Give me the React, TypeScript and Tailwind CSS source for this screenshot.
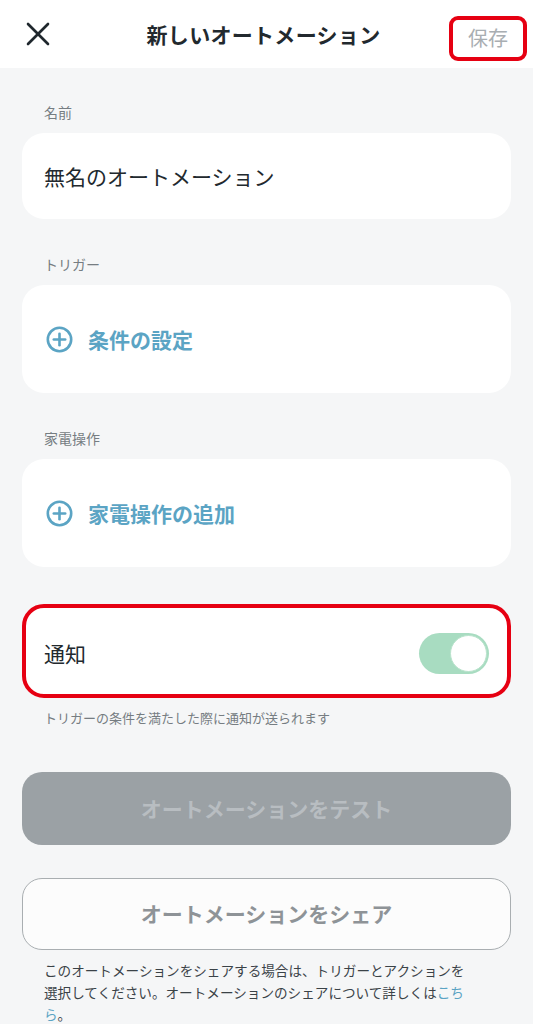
import React from 'react';

const font = { fontFamily: '"Noto Sans CJK JP", "Noto Sans", sans-serif' };

function PlusCircle() {
  return (
    <svg width="27" height="27" viewBox="0 0 27 27" fill="none" stroke="#5ba4c4" strokeWidth="2.6" strokeLinecap="round">
      <circle cx="13.5" cy="13.5" r="11.7" />
      <line x1="13.5" y1="7.8" x2="13.5" y2="19.2" />
      <line x1="7.8" y1="13.5" x2="19.2" y2="13.5" />
    </svg>
  );
}

function SectionLabel({ children, className = '' }: { children: React.ReactNode; className?: string }) {
  return (
    <div className={`pl-[44px] h-[20px] leading-[20px] text-[14px] text-[#767d82] ${className}`}>{children}</div>
  );
}

function AddCard({ label }: { label: string }) {
  return (
    <div className="mx-[22px] mt-[11px] h-[108px] rounded-[22px] bg-white flex items-center pl-[24px] gap-[15px]">
      <PlusCircle />
      <span className="text-[21px] font-bold text-[#5ba4c4] leading-none">{label}</span>
    </div>
  );
}

export default function App() {
  return (
    <div className="min-h-screen bg-[#f5f6f7] text-[#22292e]" style={font}>
      <header className="h-[68px] bg-white grid grid-cols-[1fr_auto_1fr] items-center pr-[6px]">
        <div className="pl-[26px] flex items-center">
          <svg width="24" height="24" viewBox="0 0 24 24" fill="none" stroke="#1f272d" strokeWidth="2.6" strokeLinecap="round">
            <line x1="2" y1="2" x2="22" y2="22" />
            <line x1="22" y1="2" x2="2" y2="22" />
          </svg>
        </div>
        <h1 className="text-[21px] font-bold leading-none tracking-[0.3px]">新しいオートメーション</h1>
        <div className="flex justify-end">
          <button className="mt-[8px] h-[45px] w-[78px] rounded-[9px] border-[4px] border-[#e60012] text-[20px] text-[#a9aeb2] leading-none flex items-center justify-center">
            保存
          </button>
        </div>
      </header>

      <main className="pt-[34px]">
        <SectionLabel>名前</SectionLabel>
        <div className="mx-[22px] mt-[11px] h-[86px] rounded-[22px] bg-white flex items-center pl-[22px]">
          <span className="text-[21px] leading-none">無名のオートメーション</span>
        </div>

        <SectionLabel className="mt-[35px]">トリガー</SectionLabel>
        <AddCard label="条件の設定" />

        <SectionLabel className="mt-[35px]">家電操作</SectionLabel>
        <AddCard label="家電操作の追加" />

        <div className="mx-[22px] mt-[37px] h-[94px] rounded-[22px] bg-white border-[4px] border-[#e60012] flex items-center justify-between pl-[18px] pr-[18px] pt-[5px]">
          <span className="text-[21px] leading-none">通知</span>
          <div className="w-[70px] h-[41px] rounded-full bg-[#a8dcc1] flex items-center justify-end pr-[2px]">
            <div className="w-[37px] h-[37px] rounded-full bg-white border-[1.5px] border-[#b9e3cc]" />
          </div>
        </div>

        <p className="pl-[44px] mt-[11px] text-[13px] leading-[18px] text-[#767d82]">
          トリガーの条件を満たした際に通知が送られます
        </p>

        <button className="mx-[22px] mt-[45px] w-[489px] h-[73px] rounded-[20px] bg-[#9ba1a5] text-[21px] font-bold text-[#b8bdc1] flex items-center justify-center">
          オートメーションをテスト
        </button>

        <button className="mx-[22px] mt-[33px] w-[489px] h-[72px] rounded-[20px] bg-[#fcfcfc] border-[1.5px] border-[#a9aeb1] text-[21px] font-bold text-[#8e9397] flex items-center justify-center">
          オートメーションをシェア
        </button>

        <div className="pl-[44px] mt-[9px] text-[13.6px] leading-[22px] text-[#3a4247]">
          <div>このオートメーションをシェアする場合は、トリガーとアクションを</div>
          <div>
            選択してください。オートメーションのシェアについて詳しくは<span className="text-[#5ba4c4]">こち</span>
          </div>
          <div>
            <span className="text-[#5ba4c4]">ら</span>。
          </div>
        </div>
      </main>
    </div>
  );
}
